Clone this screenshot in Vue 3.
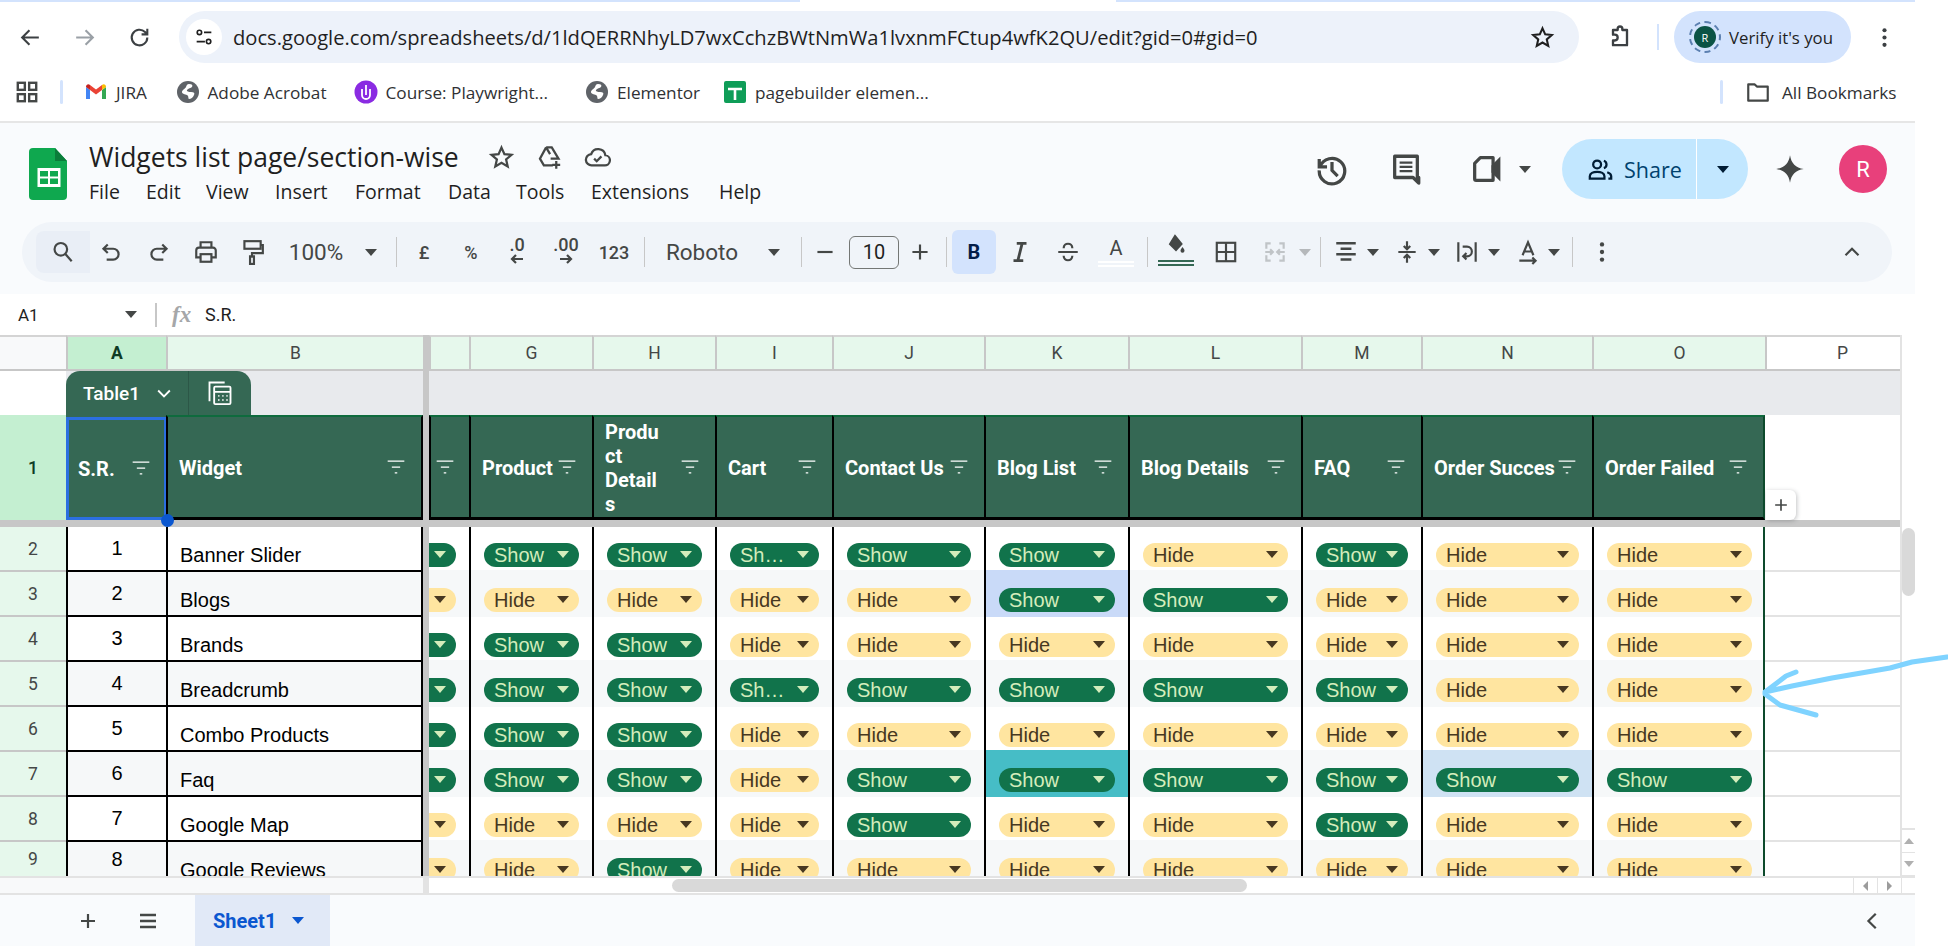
<script setup>
const I = {
  back: '<path d="M20 12H5M11 5l-7 7 7 7"/>',
  forward: '<path d="M4 12h15M13 5l7 7-7 7"/>',
  reload: '<path d="M19.5 12a7.5 7.5 0 1 1-2.2-5.3L19.5 9M19.5 3.5V9H14"/>',
  tune: '<circle cx="7" cy="7" r="2.4"/><path d="M12 7h8M4 17h9"/><circle cx="17" cy="17" r="2.4"/>',
  star: '<path d="M12 3.2l2.6 5.8 6.3.6-4.8 4.2 1.4 6.2L12 16.8l-5.5 3.2 1.4-6.2-4.8-4.2 6.3-.6z"/>',
  ext: '<path d="M6 6h4V5a2 2 0 0 1 4 0v1h4v13H6v-4h1.500a2.500 2.500 0 0 0 0-5H6z" stroke-linejoin="round"/>',
  dots: '<g fill="currentColor" stroke="none"><circle cx="12" cy="5" r="2"/><circle cx="12" cy="12" r="2"/><circle cx="12" cy="19" r="2"/></g>',
  apps: '<rect x="3.500" y="3.500" width="6.500" height="6.500" stroke-width="2.200"/><rect x="14" y="3.500" width="6.500" height="6.500" stroke-width="2.200"/><rect x="3.500" y="14" width="6.500" height="6.500" stroke-width="2.200"/><rect x="14" y="14" width="6.500" height="6.500" stroke-width="2.200"/>',
  gmail: '<g stroke="none"><path fill="#4285f4" d="M2 7v12h4v-9z"/><path fill="#34a853" d="M18 10v9h4V7z"/><path fill="#ea4335" d="M6 10V5l6 4.500L18 5v5l-6 4.500z"/><path fill="#c5221f" d="M2 7c0-2.500 2.400-3.600 4-2v5z"/><path fill="#fbbc04" d="M22 7c0-2.500-2.400-3.600-4-2v5z"/></g>',
  globe: '<g stroke="none"><circle cx="12" cy="12" r="11" fill="#5f6368"/><path fill="#fff" d="M13 4c3 0 4 1 3 3-1 1.500-4 1-5 3-.7 1.500 2 2 4 2 3 0 4 1 3 3-1 2.500-3 4-5 4-1 0 0-3-2-4-2-1-5-1-5-3s3-3 4-5c.5-1.500 1-3 3-3z"/></g>',
  course: '<circle cx="12" cy="12" r="11.500" fill="#8a2be2" stroke="none"/><path d="M8 9v6a4 4 0 0 0 8 0V9M12 5v10" stroke="#fff" stroke-width="1.800"/>',
  sheetFav: '<rect x="1" y="1" width="22" height="22" rx="2" fill="#0f9d58" stroke="none"/><path d="M5 9h14M12 9v11" stroke="#fff" stroke-width="2.600"/>',
  folder: '<path d="M3 5h6l2 2h10v13H3z" stroke-linejoin="round"/>',
  search: '<circle cx="10" cy="9.500" r="5.800"/><path d="M14.200 13.800L20 20.500"/>',
  undo: '<path d="M9 5L5 9l4 4M5 9h9a5 5 0 0 1 0 10H8"/>',
  redo: '<path d="M15 5l4 4-4 4M19 9h-9a5 5 0 0 0 0 10h6"/>',
  print: '<path d="M7 8V3h10v5M7 17H3v-6.500A2.500 2.500 0 0 1 5.500 8h13a2.500 2.500 0 0 1 2.500 2.500V17h-4"/><rect x="7" y="14" width="10" height="7"/>',
  paint: '<rect x="5" y="2" width="15" height="7"/><path d="M20 5.500h2V13H12v4"/><rect x="10.200" y="16" width="3.600" height="7" />',
  decL: '<path d="M14 6H3M7 2L3 6l4 4"/>',
  decR: '<path d="M2 6h11M9 2l4 4-4 4"/>',
  minus: '<path d="M5 12h14"/>',
  plus: '<path d="M12 5v14M5 12h14"/>',
  italic: '<path d="M9 4h9M6 20h9M14 4l-4 16" stroke-width="2.600"/>',
  strike: '<path d="M3 12h18M8 8.500C8 3 16 3 16 8.500M8 15.500c0 5.500 8 5.500 8 0"/>',
  fill: '<path d="M11 2l6.500 8-5.500 6-6-6z" fill="currentColor"/><path d="M18.500 13c1 1.500 2 2.500 2 3.700a2 2 0 0 1-4 0c0-1.200 1-2.200 2-3.700z" fill="currentColor" stroke="none"/>',
  borders: '<rect x="3.500" y="3.500" width="17" height="17"/><path d="M12 3.500v17M3.500 12h17"/>',
  merge: '<path d="M8 4H4v5M8 20H4v-5M16 4h4v5M16 20h4v-5M3 12h7M7.500 9.500L10 12l-2.500 2.500M21 12h-7M16.500 9.500L14 12l2.500 2.500"/>',
  align: '<path d="M3 4h18M7 9h10M3 14h18M7 19h10" stroke-width="2.300"/>',
  valign: '<path d="M4 12h16M12 2v7M9 6.500l3 3 3-3M12 22v-7M9 17.500l3-3 3 3"/>',
  wrap: '<path d="M4 3v18M20 3v18M8 7h4a4 4 0 0 1 0 9H9M11.500 13L8.500 16l3 3"/>',
  rotate: '<path d="M7 15L12 3l5 12M8.500 11.500h7M4 20h15M16 17l3 3-3 3"/>',
  chevUp: '<path d="M6 15l6-6 6 6"/>',
  chevDown: '<path d="M5 9l7 7 7-7"/>',
  chevLeft: '<path d="M15 4l-8 8 8 8"/>',
  move: '<path d="M9 3h5l6 10h-7M9 3L3.500 13 7 19h8M9 3l3.500 6M18 15v7M14.500 18.500h7"/>',
  cloud: '<path d="M7 19a5 5 0 0 1-.6-10A6.500 6.500 0 0 1 19 10a4.500 4.500 0 0 1-1 9zM9 13l2.300 2.300L15.500 11"/>',
  history: '<path d="M3 5v5.500h5.500M3.500 10.500A9 9 0 1 1 3 13M12 7v6l4 4"/>',
  comment: '<path d="M4 3h16v15h1v4l-4-4H4z" stroke-linejoin="round"/><path d="M7.500 7.500h9M7.500 10.500h9M7.500 13.500h9" stroke-width="1.700"/>',
  meet: '<path d="M8 4h9v16H5a1 1 0 0 1-1-1V8z" stroke-linejoin="round"/><path d="M17 10l4-4v12l-4-4z" fill="currentColor"/>',
  people: '<circle cx="9" cy="7.500" r="3.500"/><path d="M2.500 20v-2c0-2.500 3-4 6.500-4s6.500 1.500 6.500 4v2zM15 4.200a3.500 3.500 0 0 1 0 6.600M18 14.500c2 .7 3.500 1.800 3.500 3.500v2H19"/>',
  gemini: '<path fill="currentColor" stroke="none" d="M12 1c1 6.500 4.500 10 11 11-6.500 1-10 4.500-11 11-1-6.500-4.500-10-11-11 6.500-1 10-4.500 11-11z"/>',
  calc: '<path d="M3 19V3h13"/><rect x="7" y="6.500" width="14" height="15" rx="1"/><path d="M7 11h14M10.500 14.500h1M14 14.500h1M17.500 14.500h1M10.500 18h1M14 18h1M17.500 18h1"/>',
  filter: '<path d="M2 5h20M7 12h10M10.500 19h3"/>',
  menu: '<path d="M4 6h16M4 12h16M4 18h16" stroke-width="2.400"/>'
}

const left = [
  { i: 'search', c: 63, w: 54, k: 'hl' }, { i: 'undo', c: 111 }, { i: 'redo', c: 159 }, { i: 'print', c: 206 }, { i: 'paint', c: 252 },
  { t: '100%', c: 316, w: 60 }, { k: 'caret', c: 371, w: 14 }, { k: 'sep', c: 396, w: 1 },
  { t: '£', c: 424, w: 20, k: 'sm' }, { t: '%', c: 471, w: 24, k: 'sm' },
  { t: '.0', c: 517, w: 26, a: 'decL', k: 'dec' }, { t: '.00', c: 566, w: 30, a: 'decR', k: 'dec' }, { t: '123', c: 614, w: 32, k: 'sm' },
  { k: 'sep', c: 644, w: 1 }, { t: 'Roboto', c: 702, w: 74 }, { k: 'caret', c: 774, w: 14 }, { k: 'sep', c: 801, w: 1 },
  { i: 'minus', c: 825 }, { t: '10', c: 874, w: 50, k: 'size' }, { i: 'plus', c: 920 }, { k: 'sep', c: 946, w: 1 },
  { t: 'B', c: 974, w: 44, k: 'bold' }, { i: 'italic', c: 1020 }, { i: 'strike', c: 1068 },
  { t: 'A', c: 1116, w: 36, k: 'color', u: '#fff' }, { k: 'sep', c: 1147, w: 1 },
  { i: 'fill', c: 1176, w: 36, k: 'fillc' }, { i: 'borders', c: 1226 }, { i: 'merge', c: 1275, k: 'dis' }, { k: 'caret dis', c: 1305, w: 14 }, { k: 'sep', c: 1320, w: 1 },
  { i: 'align', c: 1346 }, { k: 'caret', c: 1373, w: 14 }, { i: 'valign', c: 1406.5 }, { k: 'caret', c: 1434, w: 14 },
  { i: 'wrap', c: 1467 }, { k: 'caret', c: 1494, w: 14 }, { i: 'rotate', c: 1527.5 }, { k: 'caret', c: 1554, w: 14 }, { k: 'sep', c: 1572.6, w: 1 },
  { i: 'dots', c: 1601.6 }, { i: 'chevUp', c: 1851.6 }
]
let cursor = 22
const tools = left.map((o) => {
  const w = o.w || 26
  const ml = o.c - w / 2 - cursor
  cursor = o.c + w / 2
  return { ...o, st: { width: w + 'px', marginLeft: ml + 'px' } }
})

const cols = [
  { l: 'G', t: ['Product'] }, { l: 'H', t: ['Product', 'Details'], tall: true }, { l: 'I', t: ['Cart'] }, { l: 'J', t: ['Contact Us'] },
  { l: 'K', t: ['Blog List'] }, { l: 'L', t: ['Blog Details'] }, { l: 'M', t: ['FAQ'] }, { l: 'N', t: ['Order Success'] }, { l: 'O', t: ['Order Failed'] }
]
const rows = [
  { n: 2, a: 1, b: 'Banner Slider', v: 'SSSTSSHSHH' },
  { n: 3, a: 2, b: 'Blogs', v: 'HHHHHSSHHH', hi: { 5: 'blue' } },
  { n: 4, a: 3, b: 'Brands', v: 'SSSHHHHHHH' },
  { n: 5, a: 4, b: 'Breadcrumb', v: 'SSSTSSSSHH' },
  { n: 6, a: 5, b: 'Combo Products', v: 'SSSHHHHHHH' },
  { n: 7, a: 6, b: 'Faq', v: 'SSSHSSSSSS', hi: { 5: 'teal', 8: 'sky' } },
  { n: 8, a: 7, b: 'Google Map', v: 'HHHHSHHSHH' },
  { n: 9, a: 8, b: 'Google Reviews', v: 'HHSHHHHHHH', last: true }
]
const label = (c) => (c === 'H' ? 'Hide' : c === 'T' ? 'Sh…' : 'Show')
const kind = (c) => (c === 'H' ? 'hide' : 'show')
</script>

<template>
  <div class="root">
    <div class="page">
      <div class="strip"><span class="blue"></span><span class="tab"></span><span class="blue"></span></div>

      <div class="browser">
        <svg class="bi ml18" viewBox="0 0 24 24" v-html="I.back"></svg>
        <svg class="bi ml28 faint" viewBox="0 0 24 24" v-html="I.forward"></svg>
        <svg class="bi ml29" viewBox="0 0 24 24" v-html="I.reload"></svg>
        <div class="omni">
          <span class="tune"><svg viewBox="0 0 24 24" v-html="I.tune"></svg></span>
          <span class="url">docs.google.com/spreadsheets/d/1ldQERRNhyLD7wxCchzBWtNmWa1lvxnmFCtup4wfK2QU/edit?gid=0#gid=0</span>
          <svg class="bi star" viewBox="0 0 24 24" v-html="I.star"></svg>
        </div>
        <svg class="bi ext" viewBox="0 0 24 24" v-html="I.ext"></svg>
        <span class="bsep"></span>
        <div class="verify">
          <span class="ring"><span class="mini">R</span></span>
          <span>Verify it's you</span>
        </div>
        <svg class="bi more" viewBox="0 0 24 24" v-html="I.dots"></svg>
      </div>

      <div class="marks">
        <svg class="bi2 apps" viewBox="0 0 24 24" v-html="I.apps"></svg>
        <span class="msep first"></span>
        <svg class="fav gm" viewBox="0 0 24 24" v-html="I.gmail"></svg><span class="mk w1">JIRA</span>
        <svg class="fav g1" viewBox="0 0 24 24" v-html="I.globe"></svg><span class="mk w2">Adobe Acrobat</span>
        <svg class="fav g2" viewBox="0 0 24 24" v-html="I.course"></svg><span class="mk w3">Course: Playwright...</span>
        <svg class="fav g3" viewBox="0 0 24 24" v-html="I.globe"></svg><span class="mk w4">Elementor</span>
        <svg class="fav g4" viewBox="0 0 24 24" v-html="I.sheetFav"></svg><span class="mk w5">pagebuilder elemen...</span>
        <span class="msep second"></span>
        <svg class="bi2 folder" viewBox="0 0 24 24" v-html="I.folder"></svg>
        <span class="mk all">All Bookmarks</span>
      </div>

      <div class="docs">
        <div class="dochead">
          <svg class="logo" viewBox="0 0 38 52">
            <path fill="#0fa84f" d="M4 0H26L38 13V48a4 4 0 0 1-4 4H4a4 4 0 0 1-4-4V4a4 4 0 0 1 4-4z" />
            <path fill="#0a7d3a" d="M26 0L38 13H26z" />
            <rect x="8.500" y="20" width="23" height="19" fill="#fff" />
            <rect x="11" y="23" width="8" height="5.500" fill="#0fa84f" />
            <rect x="21" y="23" width="8" height="5.500" fill="#0fa84f" />
            <rect x="11" y="30.500" width="8" height="5.500" fill="#0fa84f" />
            <rect x="21" y="30.500" width="8" height="5.500" fill="#0fa84f" />
          </svg>
          <div class="titles">
            <div class="titlerow">
              <span class="title">Widgets list page/section-wise</span>
              <svg class="ti t1" viewBox="0 0 24 24" v-html="I.star"></svg>
              <svg class="ti t2" viewBox="0 0 24 24" v-html="I.move"></svg>
              <svg class="ti t3" viewBox="0 0 24 24" v-html="I.cloud"></svg>
            </div>
            <nav class="menus">
              <span class="m1">File</span><span class="m2">Edit</span><span class="m3">View</span><span class="m4">Insert</span><span class="m5">Format</span><span class="m6">Data</span><span class="m7">Tools</span><span class="m8">Extensions</span><span>Help</span>
            </nav>
          </div>
          <div class="actions">
            <svg class="ai" viewBox="0 0 24 24" v-html="I.history"></svg>
            <svg class="ai a2" viewBox="0 0 24 24" v-html="I.comment"></svg>
            <svg class="ai a3" viewBox="0 0 24 24" v-html="I.meet"></svg>
            <span class="caret a4"></span>
            <div class="share">
              <div class="sharemain">
                <svg class="pi" viewBox="0 0 24 24" v-html="I.people"></svg>
                <span>Share</span>
              </div>
              <div class="sharedrop"><span class="caret navy"></span></div>
            </div>
            <svg class="gem" viewBox="0 0 24 24" v-html="I.gemini"></svg>
            <span class="avatar">R</span>
          </div>
        </div>

        <div class="toolbar">
          <template v-for="(t, idx) in tools" :key="idx">
            <span v-if="t.k === 'sep'" class="tsep" :style="t.st"></span>
            <span v-else-if="t.k && t.k.startsWith('caret')" class="tcell" :style="t.st"><span class="caret" :class="{ dimmed: t.k !== 'caret' }"></span></span>
            <span v-else-if="t.k === 'hl'" class="tcell hl" :style="t.st"><svg class="tic" viewBox="0 0 24 24" v-html="I[t.i]"></svg></span>
            <span v-else-if="t.k === 'dec'" class="tcell dec" :style="t.st"><span>{{ t.t }}</span><svg viewBox="0 0 16 12" class="decar" v-html="I[t.a]"></svg></span>
            <span v-else-if="t.k === 'color'" class="tcell colr" :style="t.st"><span>{{ t.t }}</span><i class="bar white"></i></span>
            <span v-else-if="t.k === 'fillc'" class="tcell colr" :style="t.st"><svg class="tic tfill" viewBox="0 0 24 24" v-html="I[t.i]"></svg><i class="bar green"></i></span>
            <span v-else-if="t.i" class="tcell" :class="t.k" :style="t.st"><svg class="tic" viewBox="0 0 24 24" v-html="I[t.i]"></svg></span>
            <span v-else class="tcell ttext" :class="t.k" :style="t.st">{{ t.t }}</span>
          </template>
        </div>
      </div>

      <div class="formula">
        <span class="ref">A1</span>
        <span class="caret small"></span>
        <span class="fsep"></span>
        <span class="fx">fx</span>
        <span class="fval">S.R.</span>
      </div>

      <div class="grid">
        <!-- column letters -->
        <div class="corner"></div>
        <div class="ch sel">A</div>
        <div class="ch act">B</div>
        <div class="freeze"></div>
        <div class="ch act"></div>
        <div v-for="c in cols" :key="c.l" class="ch act">{{ c.l }}</div>
        <div class="ch plain">P</div>
        <div class="vscroll">
          <span class="vthumb"></span>
          <span class="vbtns">
            <span class="vbtn"><i class="tri up"></i></span>
            <span class="vbtn"><i class="tri dn"></i></span>
          </span>
        </div>

        <!-- table tab -->
        <div class="blank"></div>
        <div class="tabcell">
          <div class="tabname">
            <span>Table1</span>
            <svg class="chev" viewBox="0 0 24 24" v-html="I.chevDown"></svg>
          </div>
          <div class="tabcalc"><svg viewBox="0 0 24 24" v-html="I.calc"></svg></div>
        </div>
        <div class="freeze"></div>
        <div class="bandtail"></div>

        <!-- header row -->
        <div class="rh sel">1</div>
        <div class="th first a1"><span class="tht">S.R.</span><svg class="flt" viewBox="0 0 24 24" v-html="I.filter"></svg><i class="handle"></i></div>
        <div class="th wide"><span class="tht">Widget</span><svg class="flt" viewBox="0 0 24 24" v-html="I.filter"></svg></div>
        <div class="freeze"></div>
        <div class="th nar"><svg class="flt" viewBox="0 0 24 24" v-html="I.filter"></svg></div>
        <div v-for="c in cols" :key="'h' + c.l" class="th" :class="{ lastc: c.l === 'O' }">
          <span class="tht" :class="{ brk: c.tall }"><span v-for="p in c.t" :key="p" class="thl">{{ p }}</span></span><svg class="flt" viewBox="0 0 24 24" v-html="I.filter"></svg>
        </div>
        <div class="pcell addc"><span class="addbtn"><svg viewBox="0 0 24 24" v-html="I.plus"></svg></span></div>

        <!-- frozen divider -->
        <div class="hfreeze"></div>

        <!-- data -->
        <template v-for="r in rows" :key="r.n">
          <div class="rh" :class="{ odd: r.n % 2 && !r.last, oddl: r.last }">{{ r.n }}</div>
          <div class="num" :class="{ odd: r.n % 2 && !r.last, oddl: r.last }">{{ r.a }}</div>
          <div class="name" :class="{ odd: r.n % 2 && !r.last, oddl: r.last, pad: r.n % 2 }">{{ r.b }}</div>
          <div class="freeze"></div>
          <div
            v-for="(c, i) in r.v"
            :key="i"
            class="cell"
            :class="[{ band: r.n % 2, pad: r.n % 2, clipf: i === 0, lastc: i === 9 }, r.hi && r.hi[i]]"
          >
            <span class="pill" :class="kind(c)"><span class="pt">{{ label(c) }}</span><i class="pc"></i></span>
          </div>
          <div class="pcell" :class="{ odd: r.n % 2 && !r.last, oddl: r.last, soft: true }"></div>
        </template>
      </div>

      <div class="hbar">
        <div class="hleft"></div>
        <div class="hdiv"></div>
        <div class="htrack"><span class="hthumb"></span></div>
        <div class="harrow"><i class="tri lf"></i></div>
        <div class="harrow"><i class="tri rt"></i></div>
        <div class="hend"></div>
      </div>

      <div class="sheetbar">
        <svg class="sb plus" viewBox="0 0 24 24" v-html="I.plus"></svg>
        <svg class="sb menu" viewBox="0 0 24 24" v-html="I.menu"></svg>
        <div class="stab"><span>Sheet1</span><span class="caret blue2"></span></div>
        <svg class="sb side" viewBox="0 0 24 24" v-html="I.chevLeft"></svg>
      </div>
    </div>

    <svg class="scribble" viewBox="0 0 190 70" fill="none">
      <path d="M185 4 L150 9 L128 15 L105 19 L70 25 L30 33 L3 39 M34 19 L24 23 L3 39 L3 41 L18 52 L54 62" />
    </svg>
  </div>
</template>

<style>
html, body { margin: 0; background: #fff; }
</style>

<style scoped>
.root { position: relative; width: 1948px; height: 946px; overflow: hidden; background: #fff; font-family: Roboto, "Liberation Sans", sans-serif; color: #1f1f1f; }
.page { width: 1915px; height: 946px; display: flex; flex-direction: column; overflow: hidden; }
svg { fill: none; stroke: currentColor; stroke-width: 2; flex: none; }

.strip { height: 2px; display: flex; flex: none; }
.strip .blue { flex: 1; background: #d3e3fd; }
.strip .tab { width: 316px; background: #fff; }

.browser { height: 70px; display: flex; align-items: center; flex: none; }
.bi { width: 25px; height: 25px; color: #3c4043; }
.ml18 { margin-left: 18px; }
.ml28 { margin-left: 29px; }
.ml29 { margin-left: 30px; }
.faint { color: #9aa0a6; }
.omni { margin-left: 27px; width: 1400px; height: 52px; border-radius: 26px; background: #edf2fa; display: flex; align-items: center; box-sizing: border-box; padding-left: 7px; }
.tune { width: 36px; height: 36px; border-radius: 50%; background: #fff; display: flex; align-items: center; justify-content: center; color: #1f1f1f; }
.tune svg { width: 22px; height: 22px; stroke-width: 1.8; }
.url { margin-left: 11px; font-family: "Open Sans", sans-serif; font-size: 20.150px; white-space: nowrap; color: #1f1f1f; width: 1026px; flex: none; }
.star { margin-left: 271px; color: #1f1f1f; }
.ext { margin-left: 27px; color: #3c4043; width: 28px; height: 28px; }
.bsep { width: 2px; height: 26px; background: #d3e3fd; margin-left: 23px; }
.verify { margin-left: 15px; width: 177px; height: 52px; border-radius: 26px; background: #d3e3fd; display: flex; align-items: center; font-family: "Open Sans", sans-serif; font-size: 16.800px; color: #1f1f1f; box-sizing: border-box; padding-left: 15px; gap: 8px; white-space: nowrap; }
.ring { width: 32px; height: 32px; border-radius: 50%; border: 2px dashed #5b7fb0; box-sizing: border-box; display: flex; align-items: center; justify-content: center; flex: none; }
.mini { width: 22px; height: 22px; border-radius: 50%; background: #0b5345; color: #fff; font-size: 11px; display: flex; align-items: center; justify-content: center; }
.more { margin-left: 21px; }

.marks { height: 51px; padding-bottom: 9px; display: flex; align-items: center; border-bottom: 2px solid #e6e6e6; flex: none; box-sizing: border-box; font-family: "Open Sans", sans-serif; font-size: 17.200px; color: #303134; }
.bi2 { width: 26px; height: 26px; color: #444746; }
.apps { margin-left: 14px; }
.msep { width: 3px; height: 24px; background: #d3e3fd; border-radius: 2px; }
.msep.first { margin-left: 20px; }
.fav { width: 24px; height: 24px; }
.gm { margin-left: 21px; }
.mk { white-space: nowrap; margin-left: 8px; }
.w1 { width: 36px; }
.g1 { margin-left: 23.500px; }
.w2 { width: 124px; }
.g2 { margin-left: 22px; }
.w3 { width: 165px; }
.g3 { margin-left: 34.500px; }
.w4 { width: 85px; }
.g4 { margin-left: 21px; }
.w5 { width: 178px; }
.msep.second { margin-left: 787px; }
.folder { margin-left: 22px; }
.mk.all { margin-left: 11px; }

.docs { height: 171px; background: #f9fbfd; flex: none; display: flex; flex-direction: column; }
.dochead { height: 99px; display: flex; flex: none; box-sizing: border-box; padding-top: 25px; position: relative; }
.logo { width: 38px; height: 52px; margin-left: 29px; stroke: none; flex: none; }
.titles { margin-left: 22px; margin-top: -8px; }
.titlerow { display: flex; align-items: center; height: 34px; }
.title { font-family: "Open Sans", sans-serif; font-size: 26.500px; color: #1f1f1f; white-space: nowrap; width: 370px; }
.ti { width: 27px; height: 27px; color: #444746; }
.t1 { margin-left: 29px; }
.t2 { margin-left: 21px; }
.t3 { margin-left: 21px; }
.menus { display: flex; font-size: 19.500px; font-family: "Open Sans", sans-serif; margin-top: 1px; height: 32px; align-items: center; color: #1f1f1f; }
.menus .m1 { width: 57px; }
.menus .m2 { width: 60px; }
.menus .m3 { width: 69px; }
.menus .m4 { width: 80px; }
.menus .m5 { width: 93px; }
.menus .m6 { width: 68px; }
.menus .m7 { width: 75px; }
.menus .m8 { width: 128px; }
.actions { margin-left: auto; display: flex; align-items: center; height: 60px; margin-top: -9px; padding-right: 28px; color: #444746; }
.ai { width: 34px; height: 34px; color: #444746; stroke-width: 2.300; }
.a2 { margin-left: 40px; }
.a3 { margin-left: 46px; }
.a4 { margin-left: 16px; }
.share { margin-left: 31px; width: 186px; height: 60px; border-radius: 30px; background: #c2e7ff; display: flex; overflow: hidden; color: #001d35; }
.sharemain { width: 135px; display: flex; align-items: center; padding-left: 25px; gap: 10px; box-sizing: border-box; border-right: 1px solid #fff; font-family: "Open Sans", sans-serif; font-size: 21.500px; color: #00426e; }
.pi { width: 27px; height: 27px; color: #001d35; }
.sharedrop { flex: 1; display: flex; align-items: center; justify-content: center; }
.gem { width: 30px; height: 30px; margin-left: 27px; color: #444746; }
.avatar { width: 48px; height: 48px; border-radius: 50%; background: #e8407b; color: #fff; margin-left: 34px; display: flex; align-items: center; justify-content: center; font-size: 22px; }
.caret { width: 0; height: 0; border-left: 6px solid transparent; border-right: 6px solid transparent; border-top: 7px solid #444746; display: inline-block; flex: none; }
.caret.navy { border-top-color: #001d35; }
.caret.dimmed { border-top-color: #b5b8bb; }

.toolbar { width: 1870px; height: 60px; margin-left: 22px; border-radius: 30px; background: #f0f4f9; display: flex; align-items: center; flex: none; color: #444746; box-sizing: border-box; }
.tcell { display: flex; align-items: center; justify-content: center; flex: none; height: 44px; position: relative; }
.tic { width: 26px; height: 26px; }
.hl { background: #e9eef6; border-radius: 8px 0 0 8px; height: 42px; }
.tsep { width: 1px; height: 30px; background: #c7c7c7; flex: none; }
.ttext { font-size: 22.500px; white-space: nowrap; color: #444746; }
.ttext.sm { font-size: 18px; font-weight: 500; }
.ttext.size { height: 33px; border: 1px solid #747775; border-radius: 6px; box-sizing: border-box; color: #1f1f1f; font-size: 20px; }
.ttext.bold { background: #d3e3fd; border-radius: 6px; font-weight: 700; color: #041e49; font-size: 20px; }
.dec { flex-direction: column; font-size: 18px; line-height: 17px; }
.dec span { margin-top: -4px; font-weight: 500; }
.decar { width: 16px; height: 12px; margin-top: 0; stroke-width: 2.200; }
.colr { flex-direction: column; font-size: 20px; }
.colr span { line-height: 22px; }
.bar { display: block; width: 36px; height: 6px; border-top: 2px solid; border-bottom: 2px solid; box-sizing: border-box; margin-top: 2px; }
.bar.white { border-color: #fff; }
.bar.green { border-color: #356854; }
.tfill { width: 26px; height: 24px; margin-top: -5px; }
.dis { color: #c0c4c7; }

.formula { height: 41px; display: flex; align-items: center; flex: none; background: #fff; }
.ref { font-size: 17px; margin-left: 18px; width: 107px; color: #1f1f1f; }
.caret.small { border-left-width: 6px; border-right-width: 6px; }
.fsep { width: 2px; height: 24px; background: #c7c7c7; margin-left: 18px; }
.fx { font-family: "Liberation Serif", serif; font-style: italic; font-size: 23px; color: #a5a7a9; margin-left: 15px; width: 23px; font-weight: 700; }
.fval { font-size: 18px; margin-left: 10px; }

.grid { height: 541px; flex: none; overflow: hidden; display: grid; grid-template-columns: 66px 100px 257px 6px 40px 123px 123px 117px 152px 144px 173px 120px 171px 173px 135px 15px; grid-template-rows: 36px 44px 105px 7px 43px 47px 43px 47px 43px 47px 43px 36px; }
.corner { background: #f8f9fa; border-top: 2px solid #d4d4d4; border-bottom: 2px solid #c7c7c7; }
.ch { display: flex; align-items: center; justify-content: center; font-size: 17.500px; color: #444746; box-sizing: border-box; border-top: 2px solid #d4d4d4; border-bottom: 2px solid #c7c7c7; border-left: 2px solid #c7c7c7; }
.ch.act { background: #e6f8ec; }
.ch.sel { background: #c4efd1; font-weight: 700; color: #0f3b24; }
.ch.plain { background: #fff; padding-left: 18px; }
.freeze { background: #c7c7c7; }
.blank { background: #fff; }
.tabcell { grid-column: 2 / 4; background: #e8eaed; display: flex; }
.tabname { display: flex; align-items: center; width: 123px; box-sizing: border-box; padding-left: 17px; background: #356854; color: #fff; font-size: 19px; font-weight: 500; border-radius: 14px 0 0 0; border-right: 1px solid #2c5747; }
.chev { width: 20px; height: 20px; margin-left: 14px; color: #fff; stroke-width: 2.2; }
.tabcalc { width: 62px; background: #356854; color: #fff; border-radius: 0 14px 0 0; display: flex; align-items: center; justify-content: center; }
.tabcalc svg { width: 28px; height: 28px; stroke-width: 1.6; }
.bandtail { grid-column: 5 / 16; background: #e8eaed; }

.vscroll { grid-column: 16; grid-row: 1 / -1; background: #fff; display: flex; flex-direction: column; border-left: 2px solid #e3e3e3; box-sizing: border-box; align-items: flex-end; position: relative; }
.vthumb { width: 13px; height: 68px; background: #d9d9d9; border-radius: 7px; margin-top: 193px; }
.vbtns { margin-top: auto; width: 100%; display: flex; flex-direction: column; border-top: 2px solid #e3e3e3; }
.vbtn { height: 22px; display: flex; align-items: center; justify-content: center; border-bottom: 1px solid #e3e3e3; }
.tri { display: block; width: 0; height: 0; }
.tri.up { border-left: 5px solid transparent; border-right: 5px solid transparent; border-bottom: 6px solid #b0b0b0; }
.tri.dn { border-left: 5px solid transparent; border-right: 5px solid transparent; border-top: 6px solid #b0b0b0; }
.tri.lf { border-top: 5px solid transparent; border-bottom: 5px solid transparent; border-right: 5px solid #9c9c9c; }
.tri.rt { border-top: 5px solid transparent; border-bottom: 5px solid transparent; border-left: 5px solid #9c9c9c; }

.rh { display: flex; align-items: center; justify-content: center; font-size: 17.500px; color: #444746; background: #e6f8ec; box-sizing: border-box; }
.rh.sel { background: #c4efd1; font-weight: 500; color: #0f3b24; }
.rh.odd { border-top: 2px solid #c7c7c7; border-bottom: 2px solid #c7c7c7; }
.rh.oddl { border-top: 2px solid #c7c7c7; }

.th { background: #356854; border-top: 2px solid #0e6b3d; border-left: 2px solid #000; border-bottom: 3px solid #000; box-sizing: border-box; display: flex; align-items: center; padding: 2px 15px 0 11px; color: #fff; font-size: 20px; font-weight: 700; line-height: 24px; position: relative; min-width: 0; }
.tht { flex: 1; min-width: 0; overflow: hidden; white-space: nowrap; }
.thl { display: block; }
.tht.brk { flex: 0 0 58px; white-space: normal; }
.tht.brk .thl { word-break: break-all; }
.tht.brk + .flt { margin-left: auto; }
.flt { width: 20px; height: 20px; color: #fff; stroke-width: 1.5; margin-left: 2px; margin-top: -2px; }
.th.nar { padding: 2px 14px 0 0; justify-content: flex-end; }
.th.first { padding-left: 10px; }
.a1 { border: none; }
.a1::after { content: ""; position: absolute; inset: 2px -1px 0 0; border: 3px solid #2b6fe0; box-sizing: border-box; pointer-events: none; }
.a1 .tht { padding-left: 2px; }
.handle { position: absolute; right: -8px; bottom: -7px; width: 13px; height: 13px; border-radius: 50%; background: #0b57d0; z-index: 3; }
.th.wide { border-right: 2px solid #000; }
.th.lastc { border-right: 2px solid #0d4a2c; }
.pcell { background: #fff; box-sizing: border-box; position: relative; }
.pcell.soft.odd { border-top: 2px solid #e3e3e3; border-bottom: 2px solid #e3e3e3; }
.pcell.soft.oddl { border-top: 2px solid #e3e3e3; }
.addbtn { position: absolute; left: 1px; bottom: 0; width: 30px; height: 30px; background: #fff; border-radius: 0 6px 6px 0; box-shadow: 1px 1px 4px rgba(60, 64, 67, 0.3); display: flex; align-items: center; justify-content: center; color: #444746; }
.addbtn svg { width: 20px; height: 20px; }

.hfreeze { grid-column: 1 / 16; background: #c7c7c7; }

.num { background: #fff; border-left: 2px solid #000; box-sizing: border-box; display: flex; align-items: center; justify-content: center; font-family: "Liberation Sans", sans-serif; font-size: 20px; color: #000; }
.name { background: #fff; border-left: 2px solid #000; border-right: 2px solid #000; box-sizing: border-box; font-family: "Liberation Sans", sans-serif; font-size: 20px; color: #000; padding: 16px 0 0 12px; line-height: 24px; white-space: nowrap; }
.num.odd, .name.odd { background: #f6f8f9; border-top: 2px solid #000; border-bottom: 2px solid #000; }
.num.oddl, .name.oddl { background: #f6f8f9; border-top: 2px solid #000; }

.cell { border-left: 2px solid #000; box-sizing: border-box; padding: 16px 13px 0; background: #fff; min-width: 0; }
.cell.pad { padding-top: 18px; }
.cell.band { background: #f6f8f9; }
.cell.blue { background: #c9daf8; }
.cell.teal { background: #46bdc6; }
.cell.sky { background: #cfe2f3; }
.cell.lastc { border-right: 2px solid #0d4a2c; padding-right: 11px; }
.cell.clipf { border-left: none; padding-left: 0; padding-right: 13px; display: flex; justify-content: flex-end; align-items: flex-start; overflow: hidden; }
.cell.clipf .pill { width: 100px; flex: none; }
.pill { height: 24px; border-radius: 12px; display: flex; align-items: center; padding: 0 10px; box-sizing: border-box; font-family: "Liberation Sans", sans-serif; font-size: 20px; }
.pt { flex: 1; white-space: nowrap; }
.pc { width: 0; height: 0; border-left: 6.500px solid transparent; border-right: 6.500px solid transparent; border-top: 7px solid; margin-top: -1px; flex: none; }
.pill.hide { background: #ffe5a0; color: #473821; }
.pill.show { background: #11734b; color: #d4edbc; }

.hbar { height: 19px; flex: none; display: flex; border-bottom: 2px solid #e3e3e3; border-top: 2px solid #e3e3e3; box-sizing: border-box; }
.hleft { width: 423px; background: #f8f9fa; }
.hdiv { width: 6px; background: #e3e3e3; }
.htrack { width: 1424px; background: #fff; display: flex; align-items: center; padding-left: 243px; box-sizing: border-box; }
.hthumb { width: 575px; height: 13px; border-radius: 7px; background: #d9d9d9; }
.harrow { width: 24px; display: flex; align-items: center; justify-content: center; border-left: 1px solid #e3e3e3; box-sizing: border-box; }
.hend { flex: 1; border-left: 1px solid #e3e3e3; }

.sheetbar { flex: 1; background: #f9fbfd; display: flex; align-items: center; color: #444746; }
.sb { width: 24px; height: 24px; }
.sb.plus { margin-left: 76px; stroke-width: 2.2; }
.sb.menu { margin-left: 36px; }
.stab { margin-left: 35px; width: 135px; height: 100%; background: #e1e9f7; display: flex; align-items: center; box-sizing: border-box; padding-left: 18px; gap: 16px; color: #0b57d0; font-size: 20px; font-weight: 700; }
.caret.blue2 { border-top-color: #0b57d0; }
.sb.side { margin-left: 1532px; width: 22px; height: 22px; stroke-width: 2.4; }

.scribble { position: absolute; left: 1762px; top: 653px; width: 190px; height: 70px; stroke: #7fd3ff; stroke-width: 5; stroke-linecap: round; stroke-linejoin: round; }
</style>
